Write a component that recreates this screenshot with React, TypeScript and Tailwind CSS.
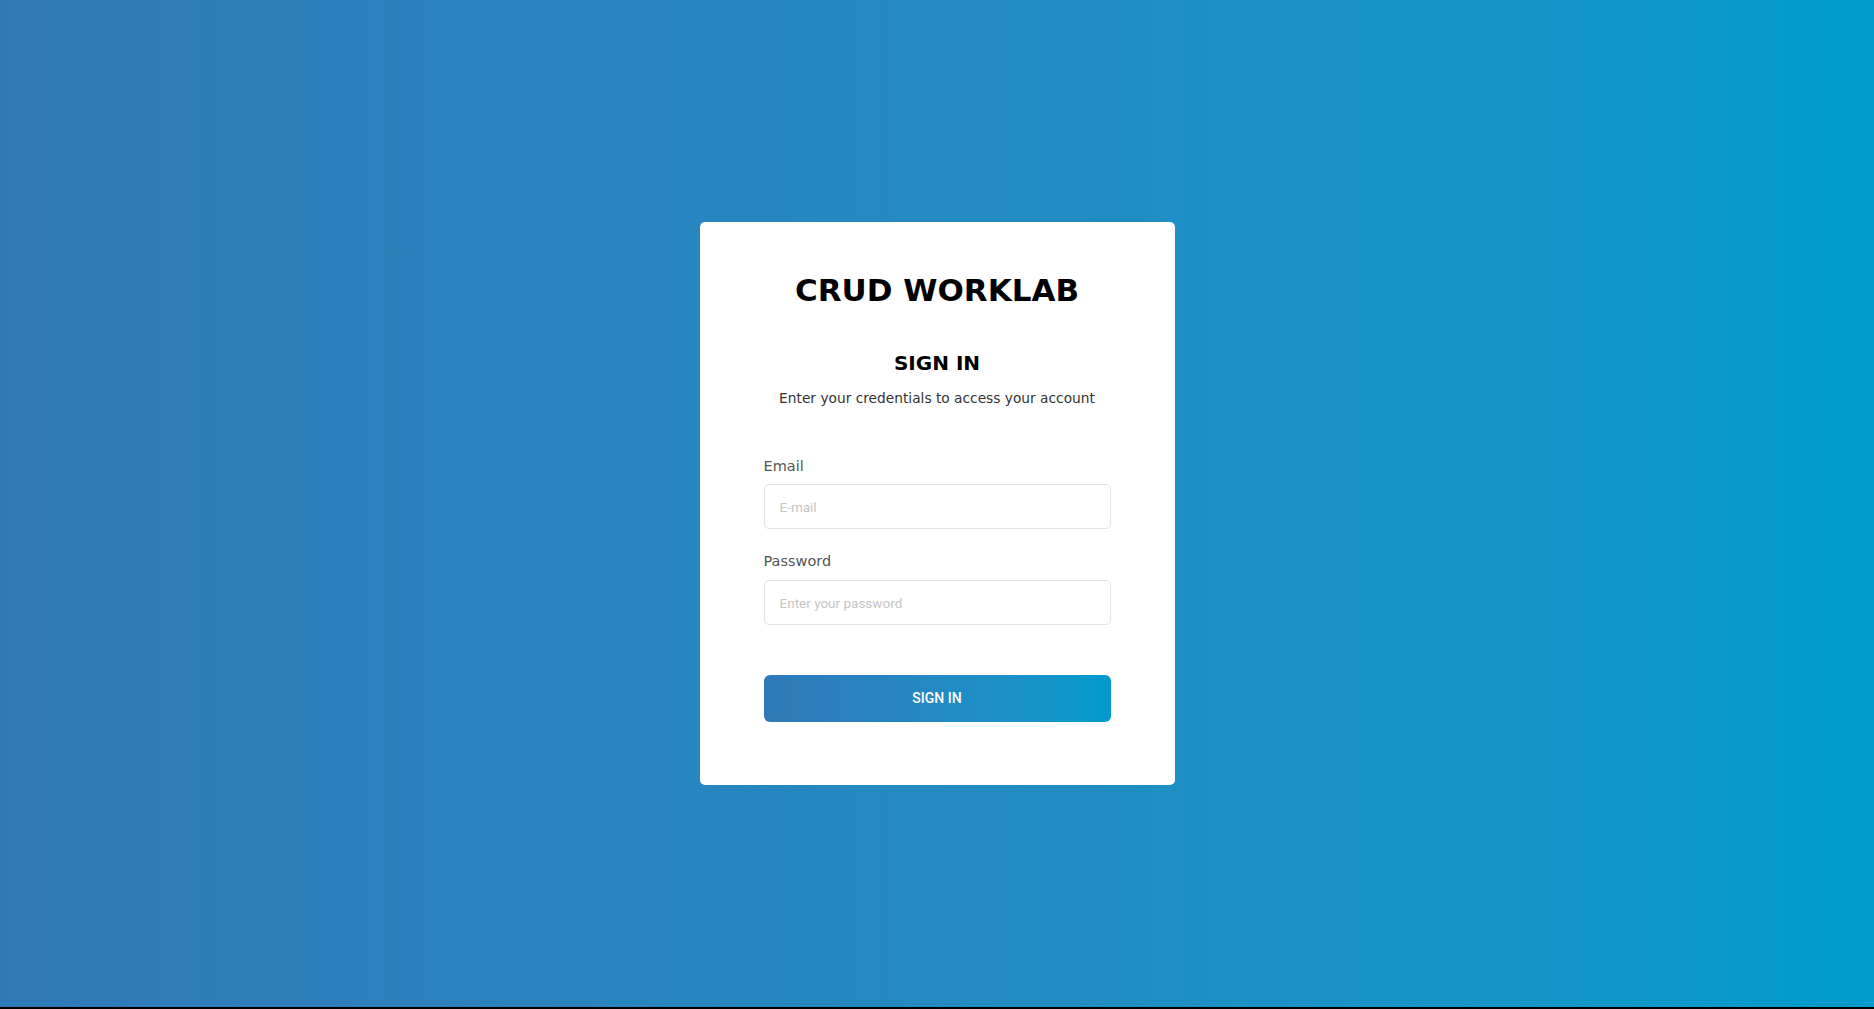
import React from "react";

export default function App() {
  return (
    <div className="h-[1009px] w-full bg-black">
      <div className="h-[1007px] w-full flex items-center justify-center bg-gradient-to-r from-[#3079b8] to-[#009bcc]">
        <div className="w-[475px] h-[563px] bg-white rounded-[5px] px-[64px] pt-[48px] flex flex-col font-['DejaVu_Sans',sans-serif]">
          <h1 className="text-center text-[31px] leading-[40px] font-bold text-black">
            CRUD WORKLAB
          </h1>
          <h2 className="mt-[39px] text-center text-[20px] leading-[28px] font-semibold text-black">
            SIGN IN
          </h2>
          <p className="mt-[11px] text-center text-[13.75px] leading-[20px] text-[#333]">
            Enter your credentials to access your account
          </p>
          <label className="mt-[48px] text-[14.5px] leading-[20px] text-[#555]">
            Email
          </label>
          <input
            type="email"
            placeholder="E-mail"
            className="mt-[8px] h-[45px] w-full border border-[#e2e2e2] rounded-[5px] px-[15px] text-[13.5px] font-['Roboto','Liberation_Sans',sans-serif] placeholder:text-[#c6c6c6] outline-none"
          />
          <label className="mt-[22px] text-[14.5px] leading-[20px] text-[#555]">
            Password
          </label>
          <input
            type="password"
            placeholder="Enter your password"
            className="mt-[9px] h-[45px] w-full border border-[#e2e2e2] rounded-[5px] px-[15px] text-[13.5px] font-['Roboto','Liberation_Sans',sans-serif] placeholder:text-[#c6c6c6] outline-none"
          />
          <button className="mt-[50px] h-[47px] w-full rounded-[6px] bg-gradient-to-r from-[#3079b8] to-[#009bcc] text-white text-[14px] font-medium font-['Roboto','Liberation_Sans',sans-serif]">
            SIGN IN
          </button>
        </div>
      </div>
    </div>
  );
}
